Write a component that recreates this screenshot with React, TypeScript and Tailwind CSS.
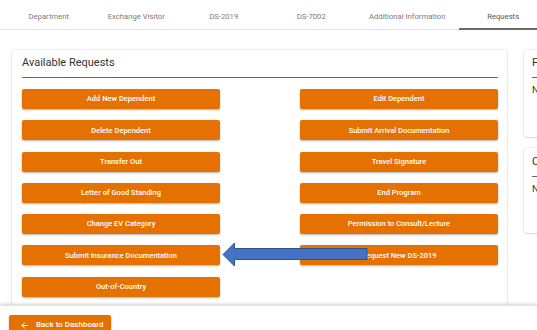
import React from "react";

const tabs = [
  { label: "Department", w: "w-[87.5px]" },
  { label: "Exchange Visitor", w: "w-[87.5px]" },
  { label: "DS-2019", w: "w-[87.5px]" },
  { label: "DS-7002", w: "w-[87.5px]" },
  { label: "Additional Information", w: "w-[104.4px]" },
  { label: "Requests", w: "w-[87.5px]", active: true },
];

const left = [
  "Add New Dependent",
  "Delete Dependent",
  "Transfer Out",
  "Letter of Good Standing",
  "Change EV Category",
  "Submit Insurance Documentation",
  "Out-of-Country",
];
const right = [
  "Edit Dependent",
  "Submit Arrival Documentation",
  "Travel Signature",
  "End Program",
  "Permission to Consult/Lecture",
  "Request New DS-2019",
];

function Btn({ label }: { label: string }) {
  return (
    <div className="h-[20px] w-[198px] rounded-[2px] bg-[#E57200] shadow-[0_1px_2px_rgba(0,0,0,0.3)] flex items-center justify-center text-white text-[7.5px] font-medium leading-none">
      {label}
    </div>
  );
}

export default function App() {
  return (
    <div
      className="relative w-[537px] h-[330px] overflow-hidden bg-white"
      style={{ fontFamily: "Roboto, 'Liberation Sans', sans-serif" }}
    >
      {/* Tabs */}
      <div className="flex h-[30px] pl-[5px] border-b border-[#e6e6e6]">
        {tabs.map((t) => (
          <div
            key={t.label}
            className={`relative shrink-0 ${t.w} flex items-center justify-center pt-[4px] text-[7.7px] whitespace-nowrap ${
              t.active ? "text-[#555]" : "text-[#7a7a7a]"
            }`}
          >
            {t.label}
            {t.active && (
              <div className="absolute left-0 right-0 bottom-[-1px] h-[2px] bg-[#6b6b6b]" />
            )}
          </div>
        ))}
      </div>

      {/* Main */}
      <div className="flex mt-[20px]">
        <div className="ml-[12px] w-[495px] h-[290px] shrink-0 rounded-[3px] bg-white shadow-[0_0_2px_rgba(0,0,0,0.2),0_1px_2px_rgba(0,0,0,0.12)] pl-[10px] pr-[9px]">
          <div className="pt-[6px] pb-[7px] border-b border-[#666] text-[11px] leading-[14px] text-[#333]">
            Available Requests
          </div>
          <div className="mt-[11px] flex justify-between">
            <div className="flex flex-col gap-y-[11.3px]">
              {left.map((l) => (
                <Btn key={l} label={l} />
              ))}
            </div>
            <div className="flex flex-col gap-y-[11.3px]">
              {right.map((l) => (
                <Btn key={l} label={l} />
              ))}
            </div>
          </div>
        </div>

        <div className="ml-[17px] flex flex-col gap-[11px] shrink-0">
          <div className="w-[150px] h-[87px] rounded-[3px] bg-white shadow-[0_0_2px_rgba(0,0,0,0.2),0_1px_2px_rgba(0,0,0,0.12)] pl-[8px] pr-[8px]">
            <div className="pt-[6px] pb-[7px] border-b border-[#666] text-[11px] leading-[14px] text-[#333] whitespace-nowrap">
              Forms
            </div>
            <div className="mt-[6px] text-[9.5px] leading-[12px] text-[#333] whitespace-nowrap">
              None
            </div>
          </div>
          <div className="w-[150px] h-[85px] rounded-[3px] bg-white shadow-[0_0_2px_rgba(0,0,0,0.2),0_1px_2px_rgba(0,0,0,0.12)] pl-[8px] pr-[8px]">
            <div className="pt-[7px] pb-[7px] border-b border-[#666] text-[11px] leading-[14px] text-[#333] whitespace-nowrap">
              Comments
            </div>
            <div className="mt-[6px] text-[9.5px] leading-[12px] text-[#333] whitespace-nowrap">
              None
            </div>
          </div>
        </div>
      </div>

      {/* Blue arrow annotation */}
      <svg
        className="absolute left-[220px] top-[240px]"
        width="150"
        height="30"
        viewBox="220 240 150 30"
      >
        <polygon
          points="223,254.5 234.5,243 234.5,248.5 367,248.5 367,259.5 234.5,259.5 234.5,266"
          fill="#4472C4"
          stroke="#2F528F"
          strokeWidth="1"
        />
      </svg>

      {/* Footer */}
      <div className="absolute left-0 right-0 bottom-0 h-[25px] bg-white shadow-[0_-1px_3px_rgba(0,0,0,0.18)] border-t border-[#e3e3e3]">
        <div className="ml-[9px] mt-[9px] w-[102px] h-[20px] rounded-[2px] bg-[#E57200] shadow-[0_1px_2px_rgba(0,0,0,0.3)] flex items-center text-white text-[8px] font-medium leading-none">
          <svg className="ml-[11px]" width="9" height="9" viewBox="0 0 24 24" fill="none" stroke="white" strokeWidth="2.6" strokeLinecap="round" strokeLinejoin="round">
            <path d="M19 12H5" />
            <path d="M12 19l-7-7 7-7" />
          </svg>
          <span className="ml-[7px]">Back to Dashboard</span>
        </div>
      </div>
    </div>
  );
}
